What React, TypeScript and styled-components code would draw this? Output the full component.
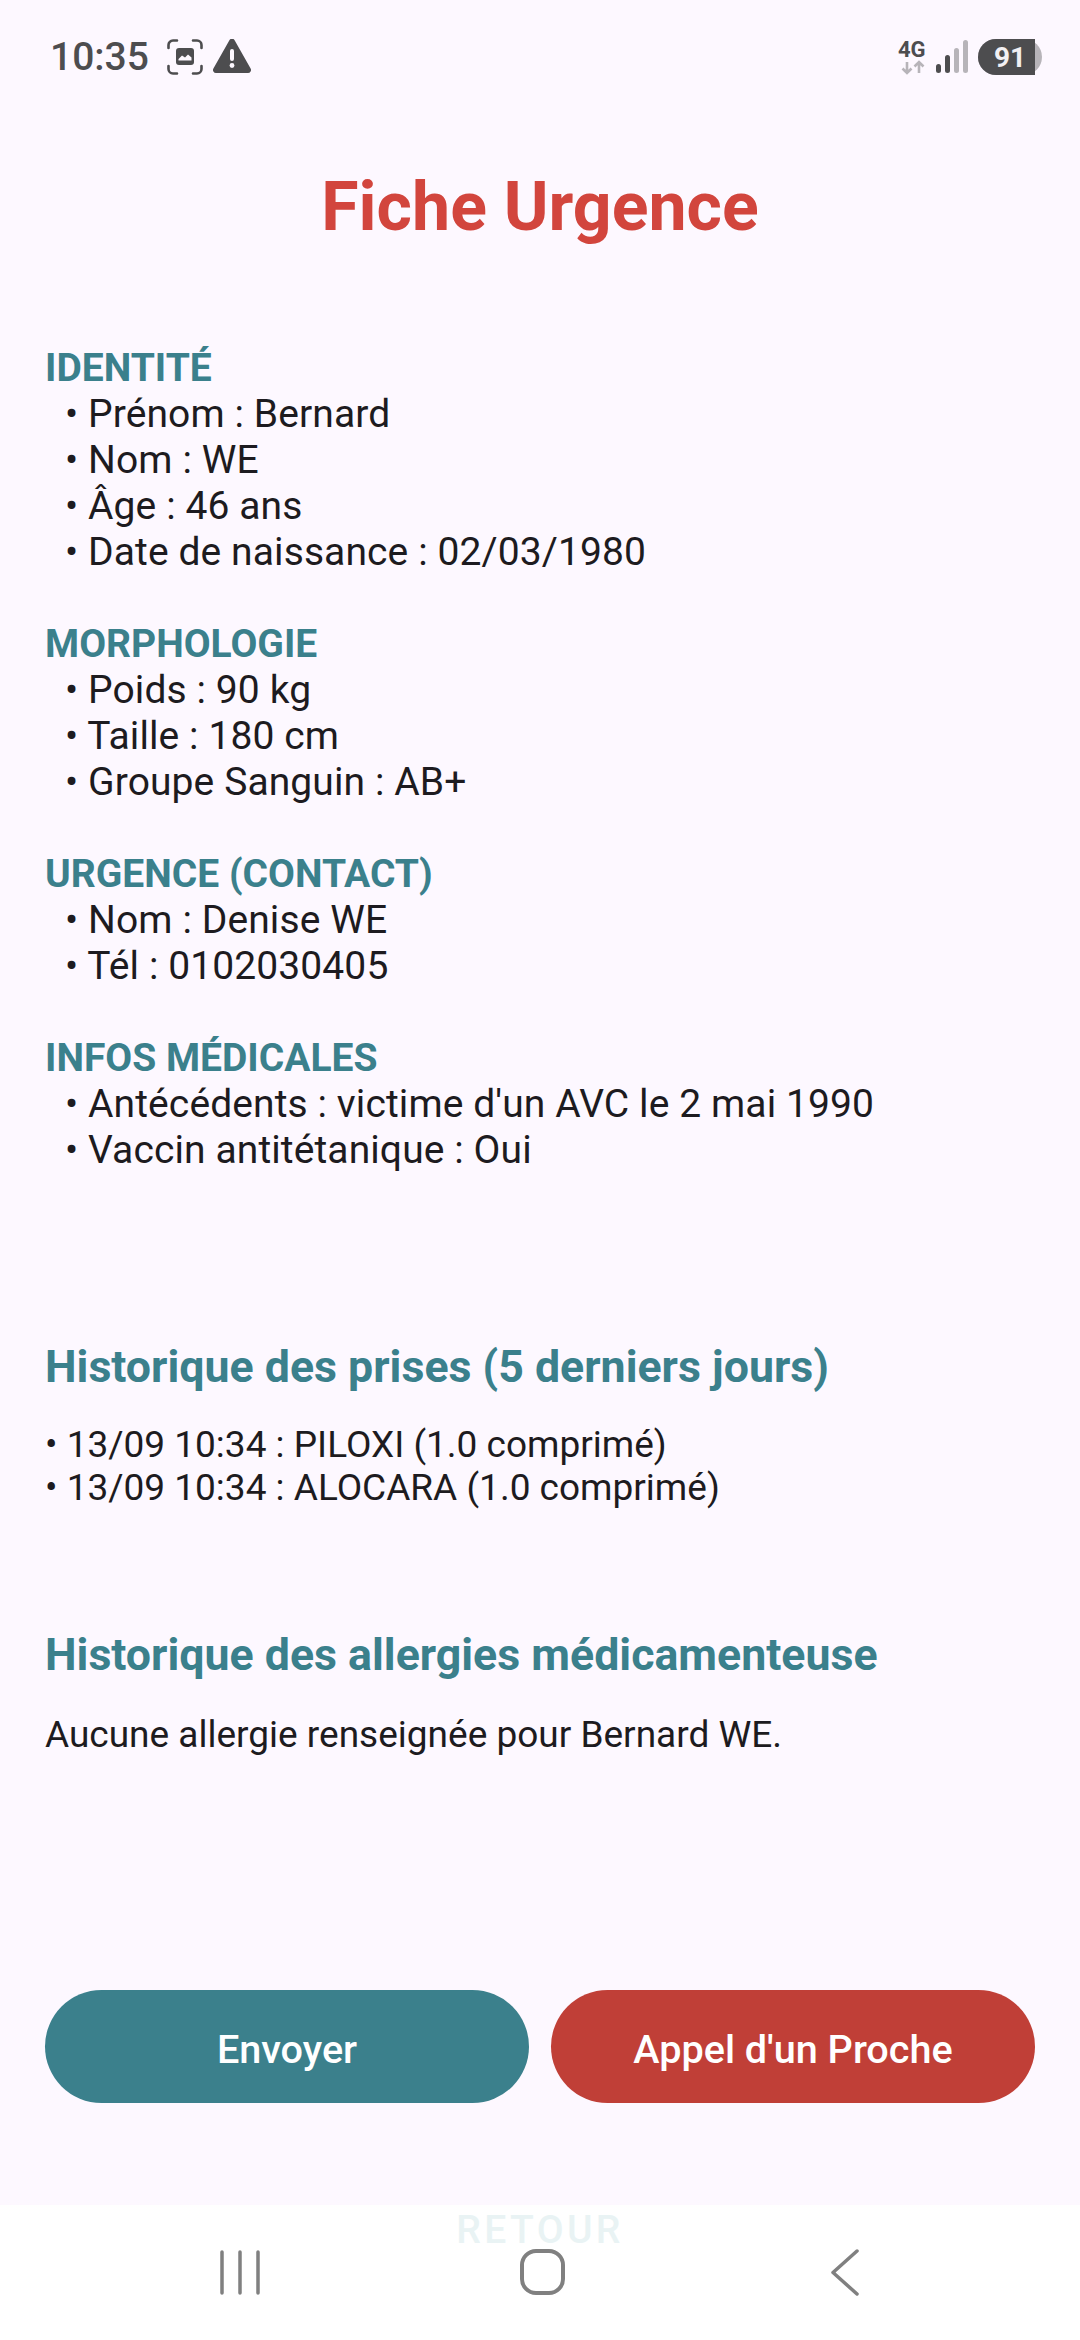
import React from 'react';
import styled, { createGlobalStyle } from 'styled-components';

const GlobalStyle = createGlobalStyle`
  html, body { margin: 0; padding: 0; background: #fdf8ff; }
  body { font-family: Roboto, "Liberation Sans", sans-serif; color: #1d1b20; }
  * { box-sizing: border-box; }
`;

const Screen = styled.div`
  width: 1080px;
  height: 2340px;
  display: flex;
  flex-direction: column;
  background: #fdf8ff;
  overflow: hidden;
`;

const StatusBar = styled.header`
  height: 114px;
  flex: none;
  display: flex;
  align-items: center;
  justify-content: space-between;
  padding: 0 38px 0 50px;
  color: #4d4d4f;
`;

const StatusGroup = styled.div`
  display: flex;
  align-items: center;
`;

const Clock = styled.span`
  font-size: 39px;
  font-weight: 500;
  margin-right: 18px;
`;

const Content = styled.main`
  flex: 1;
  display: flex;
  flex-direction: column;
  padding: 0 45px;
`;

const Title = styled.h1`
  margin: 53px 0 98px;
  font-size: 68px;
  line-height: 80px;
  font-weight: 700;
  text-align: center;
  color: #d2453d;
`;

const Section = styled.section`
  margin-bottom: 46px;
`;

const SectionHead = styled.h2`
  margin: 0;
  font-size: 39px;
  line-height: 46px;
  font-weight: 700;
  color: #3b808c;
`;

const Line = styled.div`
  font-size: 39px;
  line-height: 46px;
  letter-spacing: 0.1px;
  padding-left: 20px;
  white-space: pre;
`;

const Heading = styled.h2<{ $top: number }>`
  margin: ${({ $top }) => $top}px 0 0;
  font-size: 44.7px;
  line-height: 56px;
  font-weight: 700;
  color: #3b808c;
`;

const HistoryList = styled.div`
  margin-top: 28px;
`;

const HistoryLine = styled.div`
  font-size: 37px;
  line-height: 43px;
  white-space: pre;
`;

const Note = styled.p`
  margin: 30px 0 0;
  font-size: 37px;
  line-height: 43px;
`;

const Actions = styled.div`
  margin-top: auto;
  margin-bottom: 102px;
  display: flex;
  gap: 22px;
`;

const ActionButton = styled.button<{ $bg: string }>`
  flex: 1;
  height: 113px;
  padding: 5px 0 0;
  border: none;
  border-radius: 57px;
  background: ${({ $bg }) => $bg};
  color: #ffffff;
  font-family: inherit;
  font-size: 39.6px;
  font-weight: 500;
`;

const NavBar = styled.nav`
  height: 135px;
  flex: none;
  position: relative;
  background: #ffffff;
`;

const GhostLabel = styled.span`
  position: absolute;
  top: 2px;
  left: 0;
  right: 0;
  text-align: center;
  font-size: 39px;
  line-height: 46px;
  font-weight: 500;
  letter-spacing: 3.4px;
  color: #e9f3f4;
`;

const NavIcons = styled.svg`
  position: absolute;
  left: 0;
  top: 0;
  display: block;
`;

const sections = [
  {
    head: 'IDENTITÉ',
    lines: ['Prénom : Bernard', 'Nom : WE', 'Âge : 46 ans', 'Date de naissance : 02/03/1980'],
  },
  {
    head: 'MORPHOLOGIE',
    lines: ['Poids : 90 kg', 'Taille : 180 cm', 'Groupe Sanguin : AB+'],
  },
  {
    head: 'URGENCE (CONTACT)',
    lines: ['Nom : Denise WE', 'Tél : 0102030405'],
  },
  {
    head: 'INFOS MÉDICALES',
    lines: ["Antécédents : victime d'un AVC le 2 mai 1990", 'Vaccin antitétanique : Oui'],
  },
];

const ScreenshotIcon = () => (
  <svg width="36" height="36" viewBox="0 0 36 36" fill="none">
    <path
      d="M1.5 9V6A4.5 4.5 0 0 1 6 1.5h4M26 1.5h4A4.5 4.5 0 0 1 34.5 6v3M34.5 27v3a4.5 4.5 0 0 1-4.5 4.5h-4M10 34.5H6A4.5 4.5 0 0 1 1.5 30v-3"
      stroke="#4d4d4f"
      strokeWidth="2.6"
      strokeLinecap="round"
    />
    <rect x="9" y="9" width="18" height="17" rx="3" fill="#4d4d4f" />
    <path d="M11.5 20l3.5-3.5 3 2 3-3 3.5 3v3h-13z" fill="#fdf8ff" />
  </svg>
);

const WarningIcon = () => (
  <svg width="40" height="36" viewBox="0 1 40 36" style={{ marginLeft: 9 }}>
    <path
      d="M17.4 2.2a3 3 0 0 1 5.2 0l16 28.3a3 3 0 0 1-2.6 4.5H4a3 3 0 0 1-2.6-4.5z"
      fill="#4d4d4f"
    />
    <rect x="18" y="11" width="4" height="12" rx="2" fill="#fdf8ff" />
    <circle cx="20" cy="27.5" r="2.4" fill="#fdf8ff" />
  </svg>
);

const NetworkIcon = () => (
  <svg width="34" height="44" viewBox="0 -4 34 44">
    <text x="0" y="18" fontFamily="Roboto, sans-serif" fontSize="22" fontWeight="700" fill="#4d4d4f">
      4G
    </text>
    <path
      d="M9 23v11M4.5 29.5l4.5 4.5 4.5-4.5M21 34V23M16.5 27.5l4.5-4.5 4.5 4.5"
      fill="none"
      stroke="#b7b4b9"
      strokeWidth="2.6"
    />
  </svg>
);

const SignalIcon = () => (
  <svg width="33" height="34" viewBox="0 0 33 34" style={{ marginLeft: 3 }}>
    <rect x="1" y="24" width="5" height="9" rx="2.5" fill="#4d4d4f" />
    <rect x="10" y="15" width="5" height="18" rx="2.5" fill="#4d4d4f" />
    <rect x="19" y="8" width="5" height="25" rx="2.5" fill="#b7b4b9" />
    <rect x="28" y="0" width="5" height="33" rx="2.5" fill="#b7b4b9" />
  </svg>
);

const BatteryIcon = () => (
  <svg width="64" height="36" viewBox="0 0 64 36" style={{ marginLeft: 10 }}>
    <path d="M18 0h28a18 18 0 0 1 0 36H18a18 18 0 0 1 0-36z" fill="#b7b4b9" />
    <path d="M18 0h39v36H18a18 18 0 0 1 0-36z" fill="#4d4d4f" />
    <text
      x="32"
      y="28"
      textAnchor="middle"
      fontFamily="Roboto, sans-serif"
      fontSize="28"
      fontWeight="700"
      fill="#f2f0f3"
    >
      91
    </text>
  </svg>
);

const App: React.FC = () => {
  return (
    <Screen>
      <GlobalStyle />
      <StatusBar>
        <StatusGroup>
          <Clock>10:35</Clock>
          <ScreenshotIcon />
          <WarningIcon />
        </StatusGroup>
        <StatusGroup>
          <NetworkIcon />
          <SignalIcon />
          <BatteryIcon />
        </StatusGroup>
      </StatusBar>

      <Content>
        <Title>Fiche Urgence</Title>

        {sections.map((section) => (
          <Section key={section.head}>
            <SectionHead>{section.head}</SectionHead>
            {section.lines.map((line) => (
              <Line key={line}>• {line}</Line>
            ))}
          </Section>
        ))}

        <Heading $top={120}>Historique des prises (5 derniers jours)</Heading>
        <HistoryList>
          <HistoryLine>• 13/09 10:34 : PILOXI (1.0 comprimé)</HistoryLine>
          <HistoryLine>• 13/09 10:34 : ALOCARA (1.0 comprimé)</HistoryLine>
        </HistoryList>

        <Heading $top={118}>Historique des allergies médicamenteuse</Heading>
        <Note>Aucune allergie renseignée pour Bernard WE.</Note>

        <Actions>
          <ActionButton $bg="#3b808c">Envoyer</ActionButton>
          <ActionButton $bg="#c03f37">Appel d'un Proche</ActionButton>
        </Actions>
      </Content>

      <NavBar>
        <GhostLabel>RETOUR</GhostLabel>
        <NavIcons width="1080" height="135" viewBox="0 0 1080 135" fill="none" stroke="#808080" strokeWidth="3.5" strokeLinecap="round" strokeLinejoin="round">
          <path d="M222 47v41M240 47v41M258 47v41" />
          <rect x="522" y="46" width="41" height="42" rx="14" strokeWidth="4" />
          <path d="M857 46l-24 21.5 24 21.5" />
        </NavIcons>
      </NavBar>
    </Screen>
  );
};

export default App;
